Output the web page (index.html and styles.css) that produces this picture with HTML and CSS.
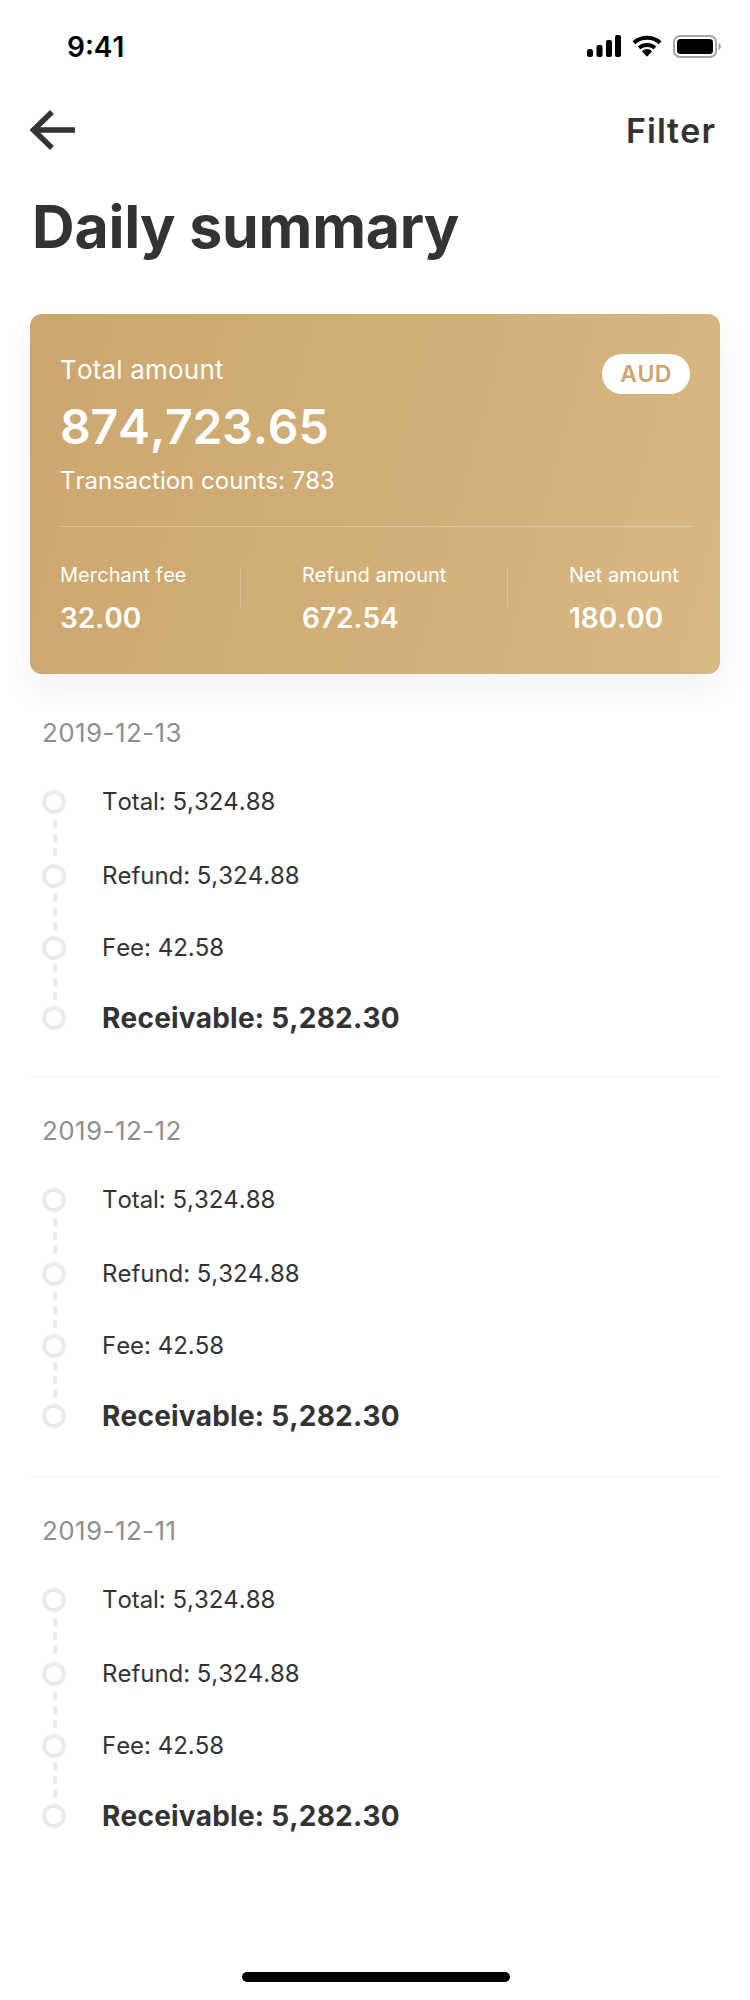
FILE: index.html
```html
<!DOCTYPE html>
<html>
  <head>
    <title>Daily summary</title>
    <link rel="stylesheet" href="styles.css">
  </head>
  <body>
    <div class="status">
      <span class="time">9:41</span>
      <div class="status-icons">
        <svg width="34" height="22" viewBox="0 0 34 22"><rect x="0" y="14" width="6" height="8" rx="2.5"/><rect x="9.5" y="10" width="6" height="12" rx="2"/><rect x="19" y="5" width="6" height="17" rx="2"/><rect x="28" y="0" width="6" height="22" rx="2"/></svg>
        <svg width="30" height="22" viewBox="0 0 32 23"><path d="M2 8 A21 21 0 0 1 30 8" fill="none" stroke="#000" stroke-width="4.4"/><path d="M7.5 13.5 A13 13 0 0 1 24.5 13.5" fill="none" stroke="#000" stroke-width="4.2"/><path d="M10.5 17 A8 8 0 0 1 21.5 17 L16 23 Z"/></svg>
        <svg width="48" height="23" viewBox="0 0 48 23"><rect x="1" y="1" width="42" height="21" rx="6" fill="#fff" stroke="#a6a6a6" stroke-width="2"/><rect x="4" y="4" width="36" height="15" rx="3.5"/><path d="M45.5 8 C47 8.6 48 10 48 11.5 C48 13 47 14.4 45.5 15 Z" fill="#a6a6a6"/></svg>
      </div>
    </div>

    <div class="nav">
      <svg class="back" width="46" height="40" viewBox="0 0 46 40"><path d="M22 2 L3.5 20 L22 38 M4 20 H45" fill="none" stroke="#333" stroke-width="5.5"/></svg>
      <span class="filter">Filter</span>
    </div>

    <h1>Daily summary</h1>

    <div class="card">
      <div class="card-top">
        <div>
          <div class="total-label">Total amount</div>
          <div class="total">874,723.65</div>
          <div class="counts">Transaction counts: 783</div>
        </div>
        <span class="badge">AUD</span>
      </div>
      <div class="card-stats">
        <div class="stat stat-fee">
          <div class="stat-label">Merchant fee</div>
          <div class="stat-value">32.00</div>
        </div>
        <div class="stat stat-refund">
          <div class="stat-label">Refund amount</div>
          <div class="stat-value">672.54</div>
        </div>
        <div class="stat stat-net">
          <div class="stat-label">Net amount</div>
          <div class="stat-value">180.00</div>
        </div>
      </div>
    </div>

    <div class="day">
      <div class="date">2019-12-13</div>
      <div class="row row1"><i class="dot"></i>Total: 5,324.88</div>
      <div class="row row2"><i class="dot"></i>Refund: 5,324.88</div>
      <div class="row row3"><i class="dot"></i>Fee: 42.58</div>
      <div class="row last"><i class="dot"></i>Receivable: 5,282.30</div>
    </div>

    <div class="day mid">
      <div class="date">2019-12-12</div>
      <div class="row row1"><i class="dot"></i>Total: 5,324.88</div>
      <div class="row row2"><i class="dot"></i>Refund: 5,324.88</div>
      <div class="row row3"><i class="dot"></i>Fee: 42.58</div>
      <div class="row last"><i class="dot"></i>Receivable: 5,282.30</div>
    </div>

    <div class="day end">
      <div class="date">2019-12-11</div>
      <div class="row row1"><i class="dot"></i>Total: 5,324.88</div>
      <div class="row row2"><i class="dot"></i>Refund: 5,324.88</div>
      <div class="row row3"><i class="dot"></i>Fee: 42.58</div>
      <div class="row last"><i class="dot"></i>Receivable: 5,282.30</div>
    </div>

    <div class="home"></div>
  </body>
</html>
```

FILE: styles.css
```css
html, body {
  margin: 0;
  padding: 0;
  background: #fff;
}
body {
  position: relative;
  width: 750px;
  height: 2000px;
  overflow: hidden;
  font-family: Inter, "Liberation Sans", sans-serif;
  font-kerning: none;
  color: #333;
}

.status {
  height: 92px;
  padding: 0 29px 0 67px;
  box-sizing: border-box;
  display: flex;
  justify-content: space-between;
  align-items: center;
}
.time {
  margin-top: 2px;
  font-size: 28px;
  font-weight: 600;
  color: #000;
}
.status-icons {
  display: flex;
  align-items: center;
  gap: 11px;
}

.nav {
  height: 76px;
  padding: 0 34px 0 30px;
  display: flex;
  justify-content: space-between;
  align-items: center;
}
.filter {
  font-size: 34px;
  font-weight: 600;
  letter-spacing: 1.1px;
}

h1 {
  margin: 23px 0 0 32px;
  font-size: 59px;
  line-height: 72px;
  font-weight: 700;
  letter-spacing: -0.2px;
}

.card {
  margin: 51px 30px 6px;
  height: 360px;
  box-sizing: border-box;
  padding: 41px 27px 0 30px;
  border-radius: 12px;
  color: #fff;
  background: linear-gradient(105deg, #cca66e, #d8b884);
  box-shadow: 0 16px 30px rgba(0, 0, 0, 0.05);
}
.card-top {
  height: 171px;
  display: flex;
  justify-content: space-between;
  align-items: flex-start;
  border-bottom: 1px solid rgba(255, 255, 255, 0.25);
}
.total-label {
  font-size: 26px;
  line-height: 30px;
  letter-spacing: 0.2px;
}
.total {
  margin-top: 13px;
  font-size: 48px;
  line-height: 58px;
  font-weight: 600;
  letter-spacing: -0.15px;
}
.counts {
  margin-top: 11px;
  font-size: 24px;
  line-height: 28px;
}
.badge {
  width: 88px;
  height: 40px;
  margin: -1px 3px 0 0;
  border-radius: 20px;
  background: #fff;
  color: #cca66e;
  font-size: 23px;
  line-height: 40px;
  font-weight: 600;
  letter-spacing: 0.4px;
  text-align: center;
}
.card-stats {
  display: flex;
  margin-top: 36px;
}
.stat-label {
  font-size: 20px;
  line-height: 24px;
}
.stat-value {
  margin-top: 14px;
  font-size: 28px;
  line-height: 34px;
  font-weight: 600;
}
.stat-fee {
  width: 181px;
}
.stat-refund {
  width: 267px;
  padding-left: 61px;
  box-sizing: border-box;
}
.stat-fee, .stat-refund {
  background: linear-gradient(rgba(255, 255, 255, 0.25), rgba(255, 255, 255, 0.25)) right 4px / 1px 40px no-repeat;
}
.stat-net {
  padding-left: 61px;
}

.day {
  margin: 0 30px;
  padding: 38px 0 0 12px;
  height: 397px;
  box-sizing: border-box;
  border-bottom: 1px solid #f0f0f0;
}
.day.mid {
  height: 400px;
  padding-top: 39px;
}
.day.end {
  padding-top: 39px;
  border-bottom: 0;
}
.date {
  font-size: 26px;
  line-height: 30px;
  letter-spacing: 0.4px;
  color: #8f8f8f;
  margin-bottom: 39px;
}
.row {
  position: relative;
  display: flex;
  align-items: center;
  height: 30px;
  font-size: 24px;
  line-height: 30px;
  letter-spacing: -0.03px;
}
.row1 {
  margin-bottom: 44px;
}
.row2 {
  margin-bottom: 42px;
}
.row3 {
  margin-bottom: 40px;
}
.row.last {
  font-size: 28px;
  font-weight: 700;
  letter-spacing: 0.2px;
}
.dot {
  width: 24px;
  height: 24px;
  box-sizing: border-box;
  margin-right: 36px;
  flex: none;
  border: 4px solid #e9ecef;
  border-radius: 50%;
}
.row1::after, .row2::after, .row3::after {
  content: "";
  position: absolute;
  left: 11px;
  top: 33px;
  width: 4px;
  height: 36px;
  background: repeating-linear-gradient(#e9ecef 0 8px, transparent 8px 14px);
}
.row3::after {
  top: 31px;
}

.home {
  position: absolute;
  left: 242px;
  top: 1972px;
  width: 268px;
  height: 10px;
  border-radius: 5px;
  background: #000;
}
```
